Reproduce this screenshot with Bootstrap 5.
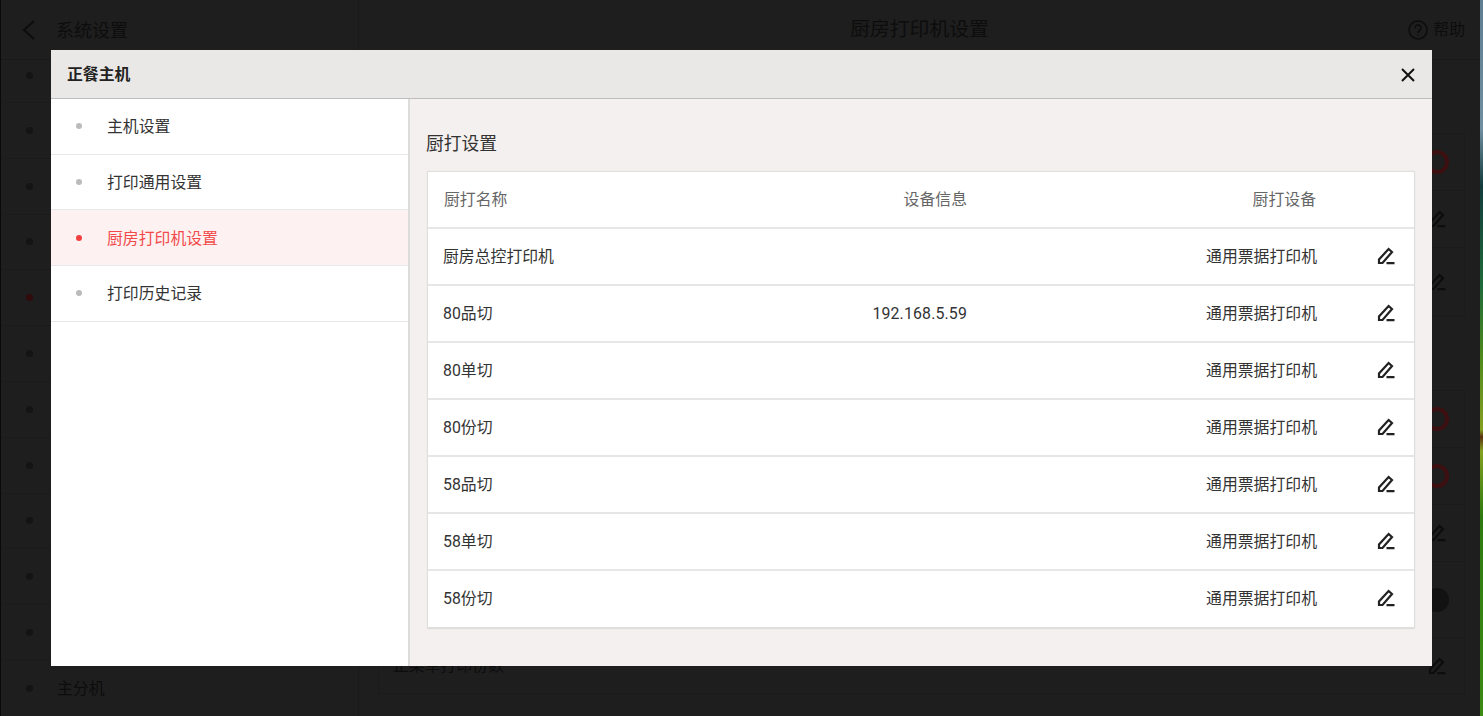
<!DOCTYPE html>
<html lang="zh-CN">
<head>
<meta charset="utf-8">
<title>厨房打印机设置</title>
<link rel="stylesheet" href="https://cdn.jsdelivr.net/npm/bootstrap@5.3.0/dist/css/bootstrap.min.css">
<style>
html,body{height:716px;overflow:hidden;margin:0}
body{font-family:Roboto,"Noto Sans CJK SC",sans-serif;background:#000;color:#333;font-size:15.85px}
.shell{height:716px;width:1483px}
.edge-l{width:1px;background:#0a0a0a}
.edge-r{width:3px;background:linear-gradient(180deg,#5f7d90 0,#6f8ea0 18%,#123c3c 26%,#1f6a3a 40%,#4f8a1c 50%,#7a9a20 58%,#83a020 60%,#5a3010 61%,#83a020 63%,#2f7a10 72%,#3c8a14 100%)}
.app{background:#1e1e1e;color:#0d0d0d;min-width:0}
.side{width:358px;border-right:1px solid #1a1a1a;flex:none}
.side-head{height:60px;padding:1px 0 0 20px;gap:19px;border-bottom:1px solid #1a1a1a;font-size:18px}
.side-row{height:55.8px;padding-left:25px;gap:24px;border-bottom:1px solid #1b1b1b}
.side-row.first{height:43px;align-items:flex-start!important;padding-top:12px}
.side-row.noline{border-bottom:0}
.bg-dot{width:7px;height:7px;border-radius:50%;background:#141414;flex:none}
.bg-dot.red{background:#320b0c}
.main-pane{min-width:0}
.main-head{height:60px;padding:1px 15px 0;border-bottom:1px solid #1a1a1a;font-size:19.8px}
.head-side{flex:1 1 0}
.help-link{font-size:15.85px;gap:5px}
.content-dim{padding:73px 15px 0 19px}
.bg-panel{border:1px solid #1b1b1b;margin-bottom:73px}
.bg-line{height:57px;padding-right:15px;border-bottom:1px solid #1b1b1b}
.bg-line:last-child{border-bottom:0}
.bg-line.tall{height:68px}
.bg-line.xtall{height:76px}
.bg-line.last{height:55px;padding-left:14px}
.ico-slot{width:24px;height:24px;flex:none}
.ring{width:24px;height:24px;border:4px solid #3e0f10;border-radius:50%}
.pill{width:24px;height:24px;background:#121212;border-radius:12px}
.dialog-box{position:fixed;left:51px;top:50px;width:1381px;height:616px;background:#f3f0ef;z-index:10}
.dialog-head{height:49px;background:#e9e8e6;border-bottom:1px solid #bdbdbd;padding:1px 17px 0 16px;font-weight:700;color:#222;flex:none}
.close-x{background:none;border:0;padding:0;line-height:0}
.dialog-main{min-height:0}
.nav-pane{width:359px;background:#fff;border-right:2px solid #dcdcdc;flex:none}
.nav-line{height:55.67px;padding:2px 0 0 25px;gap:25px;border-bottom:1px solid #e8e8e8;color:#333}
.nav-line.on{background:#fdf1f1;color:#f24a4a}
.nav-dot{width:6px;height:6px;border-radius:50%;background:#bbb;flex:none;margin-top:-2px}
.nav-line.on .nav-dot{background:#f43f3f}
.detail-pane{padding:31px 17px 0 16px;min-width:0}
.detail-title{font-size:17.8px;line-height:28px;margin:0 0 13px;font-weight:400;color:#333}
.print-card{width:988px;margin-left:1px;background:#fff;border:1px solid #dedede;border-bottom-width:2px;border-radius:2px;overflow:hidden;box-shadow:0 0 1px #cfcfcf}
.print-table{table-layout:fixed;margin:0;width:100%;--bs-table-bg:transparent}
.print-table th,.print-table td{height:57px;padding:0;vertical-align:middle;border-bottom:2px solid #e6e6e6;font-weight:400;color:#333;font-size:15.85px}
.print-table th{height:56px;color:#666}
.print-table tr:last-child td{border-bottom:0}
.print-table .c-name{width:346px;padding-left:16px}
.print-table td.c-name{padding-left:15px}
.print-table .c-info{width:193px;text-align:right}
.print-table td.c-info{letter-spacing:.16px}
.print-table .c-dev{width:350px;text-align:right}
.print-table th.c-dev{padding-right:1px}
.print-table svg{display:block;margin:-2px 0 0 60px}
</style>
</head>
<body>
<div class="shell d-flex">
  <div class="edge-l"></div>
  <div class="app flex-grow-1 d-flex">
    <aside class="side">
      <div class="side-head d-flex align-items-center">
        <svg width="16" height="20" viewBox="0 0 16 20" fill="none" stroke="#0d0d0d" stroke-width="2"><path d="M13 1 3 10l10 9"/></svg>
        <span>系统设置</span>
      </div>
      <div class="side-row first d-flex align-items-center"><i class="bg-dot"></i></div>
      <div class="side-row d-flex align-items-center"><i class="bg-dot"></i></div>
      <div class="side-row d-flex align-items-center"><i class="bg-dot"></i></div>
      <div class="side-row d-flex align-items-center"><i class="bg-dot"></i></div>
      <div class="side-row d-flex align-items-center"><i class="bg-dot red"></i></div>
      <div class="side-row d-flex align-items-center"><i class="bg-dot"></i></div>
      <div class="side-row d-flex align-items-center"><i class="bg-dot"></i></div>
      <div class="side-row d-flex align-items-center"><i class="bg-dot"></i></div>
      <div class="side-row d-flex align-items-center"><i class="bg-dot"></i></div>
      <div class="side-row d-flex align-items-center"><i class="bg-dot"></i></div>
      <div class="side-row d-flex align-items-center"><i class="bg-dot"></i></div>
      <div class="side-row noline d-flex align-items-center"><i class="bg-dot"></i><span>主分机</span></div>
    </aside>
    <main class="main-pane flex-grow-1">
      <div class="main-head d-flex align-items-center">
        <div class="head-side"></div>
        <div>厨房打印机设置</div>
        <div class="head-side help-link d-flex align-items-center justify-content-end">
          <svg width="20" height="20" viewBox="0 0 20 20" fill="none" stroke="#0d0d0d" stroke-width="1.6"><circle cx="10" cy="10" r="9"/><path d="M7 8a3 3 0 1 1 4.6 2.5c-1 .7-1.6 1.2-1.6 2.5M10 14.4v1.4"/></svg>
          <span>帮助</span>
        </div>
      </div>
      <div class="content-dim">
        <section class="bg-panel">
          <div class="bg-line d-flex align-items-center justify-content-end"><div class="ico-slot ring"></div></div>
          <div class="bg-line d-flex align-items-center justify-content-end"><div class="ico-slot d-flex align-items-center justify-content-center"><svg width="18" height="18" viewBox="0 0 18 18" fill="none" stroke="#0d0d0d" stroke-width="2.2"><path d="M2 16v-3.6L11.6 2l3.4 3L5.5 16zM9.5 16.2H17.5"/></svg></div></div>
          <div class="bg-line tall d-flex align-items-center justify-content-end"><div class="ico-slot d-flex align-items-center justify-content-center"><svg width="18" height="18" viewBox="0 0 18 18" fill="none" stroke="#0d0d0d" stroke-width="2.2"><path d="M2 16v-3.6L11.6 2l3.4 3L5.5 16zM9.5 16.2H17.5"/></svg></div></div>
        </section>
        <section class="bg-panel">
          <div class="bg-line d-flex align-items-center justify-content-end"><div class="ico-slot ring"></div></div>
          <div class="bg-line d-flex align-items-center justify-content-end"><div class="ico-slot ring"></div></div>
          <div class="bg-line d-flex align-items-center justify-content-end"><div class="ico-slot d-flex align-items-center justify-content-center"><svg width="18" height="18" viewBox="0 0 18 18" fill="none" stroke="#0d0d0d" stroke-width="2.2"><path d="M2 16v-3.6L11.6 2l3.4 3L5.5 16zM9.5 16.2H17.5"/></svg></div></div>
          <div class="bg-line xtall d-flex align-items-center justify-content-end"><div class="ico-slot pill"></div></div>
          <div class="bg-line last d-flex align-items-center justify-content-between">
            <span>正菜单打印份数</span>
            <div class="ico-slot d-flex align-items-center justify-content-center"><svg width="18" height="18" viewBox="0 0 18 18" fill="none" stroke="#0d0d0d" stroke-width="2.2"><path d="M2 16v-3.6L11.6 2l3.4 3L5.5 16zM9.5 16.2H17.5"/></svg></div>
          </div>
        </section>
      </div>
    </main>
  </div>
  <div class="edge-r"></div>
</div>

<div class="dialog-box d-flex flex-column">
  <header class="dialog-head d-flex align-items-center justify-content-between">
    <span>正餐主机</span>
    <button class="close-x" type="button" aria-label="关闭">
      <svg width="14" height="14" viewBox="0 0 14 14" fill="none" stroke="#111" stroke-width="2"><path d="M1 1l12 12M13 1 1 13"/></svg>
    </button>
  </header>
  <div class="dialog-main d-flex flex-grow-1">
    <nav class="nav-pane">
      <div class="nav-line d-flex align-items-center"><i class="nav-dot"></i><span>主机设置</span></div>
      <div class="nav-line d-flex align-items-center"><i class="nav-dot"></i><span>打印通用设置</span></div>
      <div class="nav-line on d-flex align-items-center"><i class="nav-dot"></i><span>厨房打印机设置</span></div>
      <div class="nav-line d-flex align-items-center"><i class="nav-dot"></i><span>打印历史记录</span></div>
    </nav>
    <div class="detail-pane flex-grow-1">
      <h2 class="detail-title">厨打设置</h2>
      <div class="print-card">
        <table class="table print-table">
          <thead><tr><th class="c-name">厨打名称</th><th class="c-info">设备信息</th><th class="c-dev">厨打设备</th><th class="c-act"></th></tr></thead>
          <tbody>
            <tr><td class="c-name">厨房总控打印机</td><td class="c-info"></td><td class="c-dev">通用票据打印机</td><td class="c-act"><svg width="18" height="18" viewBox="0 0 18 18" fill="none" stroke="#222" stroke-width="2.2"><path d="M2 16v-3.6L11.6 2l3.4 3L5.5 16zM9.5 16.2H17.5"/></svg></td></tr>
            <tr><td class="c-name">80品切</td><td class="c-info">192.168.5.59</td><td class="c-dev">通用票据打印机</td><td class="c-act"><svg width="18" height="18" viewBox="0 0 18 18" fill="none" stroke="#222" stroke-width="2.2"><path d="M2 16v-3.6L11.6 2l3.4 3L5.5 16zM9.5 16.2H17.5"/></svg></td></tr>
            <tr><td class="c-name">80单切</td><td class="c-info"></td><td class="c-dev">通用票据打印机</td><td class="c-act"><svg width="18" height="18" viewBox="0 0 18 18" fill="none" stroke="#222" stroke-width="2.2"><path d="M2 16v-3.6L11.6 2l3.4 3L5.5 16zM9.5 16.2H17.5"/></svg></td></tr>
            <tr><td class="c-name">80份切</td><td class="c-info"></td><td class="c-dev">通用票据打印机</td><td class="c-act"><svg width="18" height="18" viewBox="0 0 18 18" fill="none" stroke="#222" stroke-width="2.2"><path d="M2 16v-3.6L11.6 2l3.4 3L5.5 16zM9.5 16.2H17.5"/></svg></td></tr>
            <tr><td class="c-name">58品切</td><td class="c-info"></td><td class="c-dev">通用票据打印机</td><td class="c-act"><svg width="18" height="18" viewBox="0 0 18 18" fill="none" stroke="#222" stroke-width="2.2"><path d="M2 16v-3.6L11.6 2l3.4 3L5.5 16zM9.5 16.2H17.5"/></svg></td></tr>
            <tr><td class="c-name">58单切</td><td class="c-info"></td><td class="c-dev">通用票据打印机</td><td class="c-act"><svg width="18" height="18" viewBox="0 0 18 18" fill="none" stroke="#222" stroke-width="2.2"><path d="M2 16v-3.6L11.6 2l3.4 3L5.5 16zM9.5 16.2H17.5"/></svg></td></tr>
            <tr><td class="c-name">58份切</td><td class="c-info"></td><td class="c-dev">通用票据打印机</td><td class="c-act"><svg width="18" height="18" viewBox="0 0 18 18" fill="none" stroke="#222" stroke-width="2.2"><path d="M2 16v-3.6L11.6 2l3.4 3L5.5 16zM9.5 16.2H17.5"/></svg></td></tr>
          </tbody>
        </table>
      </div>
    </div>
  </div>
</div>
<script src="https://cdn.jsdelivr.net/npm/bootstrap@5.3.0/dist/js/bootstrap.bundle.min.js"></script>
</body>
</html>
